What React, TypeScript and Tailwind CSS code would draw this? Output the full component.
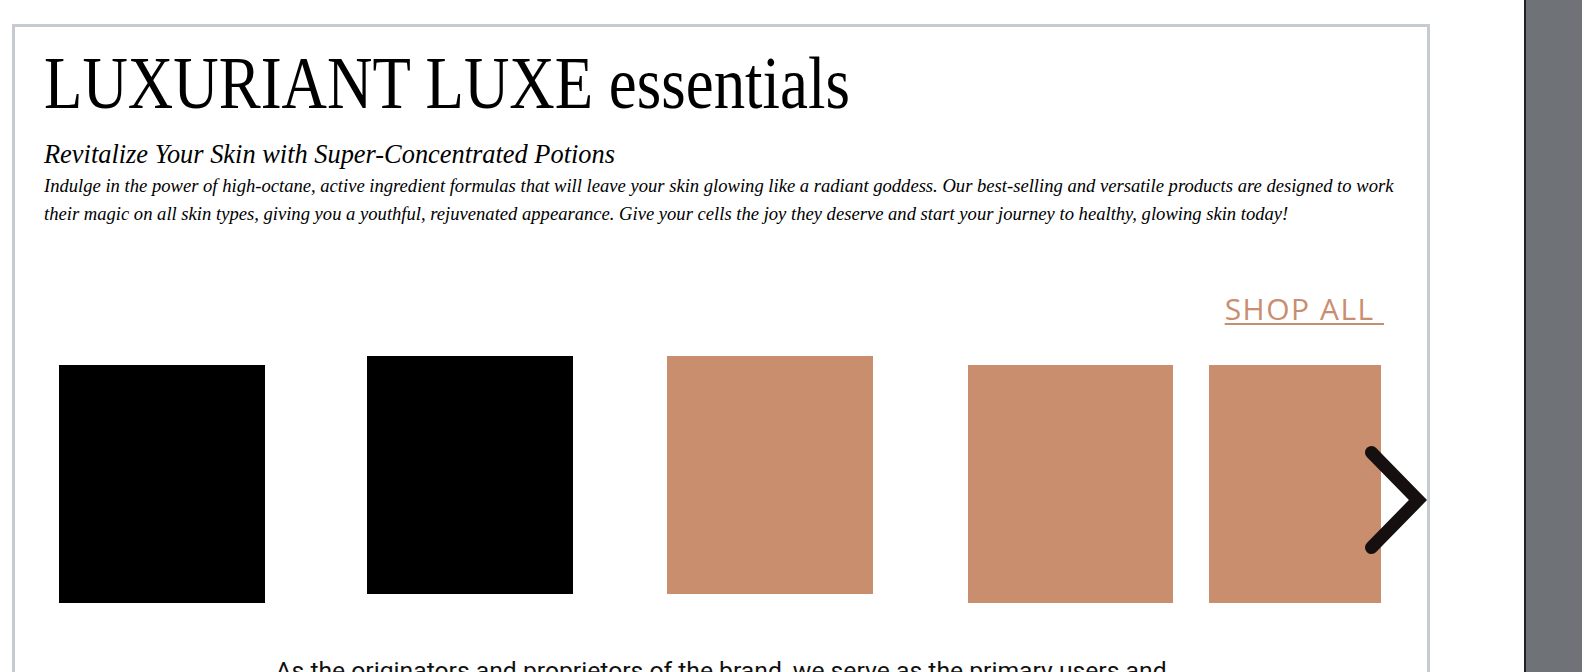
import React from "react";

const serif = { fontFamily: '"Liberation Serif", "Times New Roman", serif' };

const products = [
  { color: "bg-black", cls: "w-[206px] mt-[9px]" },
  { color: "bg-black", cls: "w-[206px] ml-[102px]" },
  { color: "bg-[#c88e6d]", cls: "w-[206px] ml-[94px]" },
  { color: "bg-[#c88e6d]", cls: "w-[205px] ml-[95px] mt-[9px]" },
  { color: "bg-[#c88e6d]", cls: "w-[172px] ml-[36px] mt-[9px]" },
];

export default function App() {
  return (
    <div className="flex h-[672px] w-full overflow-hidden bg-white">
      {/* Page canvas */}
      <div className="flex-1 pl-[12px] pt-[24px]">
        <div className="relative h-[700px] w-[1418px] overflow-hidden border-[3px] border-b-0 border-[#c5cbd0] bg-white">
          {/* Heading */}
          <div className="pl-[29px] pt-[19px]">
            <h1
              className="origin-left scale-x-[0.85] whitespace-nowrap text-[74px] leading-[74px] text-black"
              style={serif}
            >
              LUXURIANT LUXE essentials
            </h1>
            <h2 className="mt-[19px] text-[26.4px] leading-[30px] italic text-black" style={serif}>
              Revitalize Your Skin with Super-Concentrated Potions
            </h2>
            <p className="mt-[3px] whitespace-nowrap text-[18.6px] leading-[28px] italic text-black" style={serif}>
              Indulge in the power of high-octane, active ingredient formulas that will leave your skin glowing like a radiant goddess. Our best-selling and versatile products are designed to work
              <br />
              their magic on all skin types, giving you a youthful, rejuvenated appearance. Give your cells the joy they deserve and start your journey to healthy, glowing skin today!
            </p>
          </div>

          {/* Shop all */}
          <div className="mt-[61px] flex justify-end pr-[43px]">
            <a
              href="#"
              className="text-[30px] leading-[40px] tracking-[1.5px] text-[#c98e6f] underline decoration-[2px] underline-offset-[3px]"
              style={{ fontFamily: '"Open Sans", sans-serif' }}
            >
              SHOP ALL&nbsp;
            </a>
          </div>

          {/* Product carousel */}
          <div className="mt-[27px] flex items-start pl-[44px]">
            {products.map((p, i) => (
              <div key={i} className={`h-[238px] shrink-0 ${p.color} ${p.cls}`} />
            ))}
          </div>

          <svg
            className="absolute left-[1345px] top-[413px]"
            width="90"
            height="120"
            viewBox="0 0 90 120"
            fill="none"
          >
            <path
              d="M11.5 12.5 L58 60 L11.5 107.5"
              stroke="#150f0f"
              strokeWidth="13"
              strokeLinecap="round"
              strokeLinejoin="miter"
            />
          </svg>

          {/* About */}
          <p
            className="mt-[51px] text-center text-[24.7px] leading-[33px] text-[#111]"
            style={{ fontFamily: "Roboto, sans-serif" }}
          >
            As the originators and proprietors of the brand, we serve as the primary users and
            <br />
            beneficiaries of our own formulas, crafted with care for every skin.
          </p>
        </div>
      </div>

      {/* Dark side panel */}
      <div className="w-[58px] shrink-0 border-l-2 border-[#202124] bg-[#6f7276]" />
    </div>
  );
}
